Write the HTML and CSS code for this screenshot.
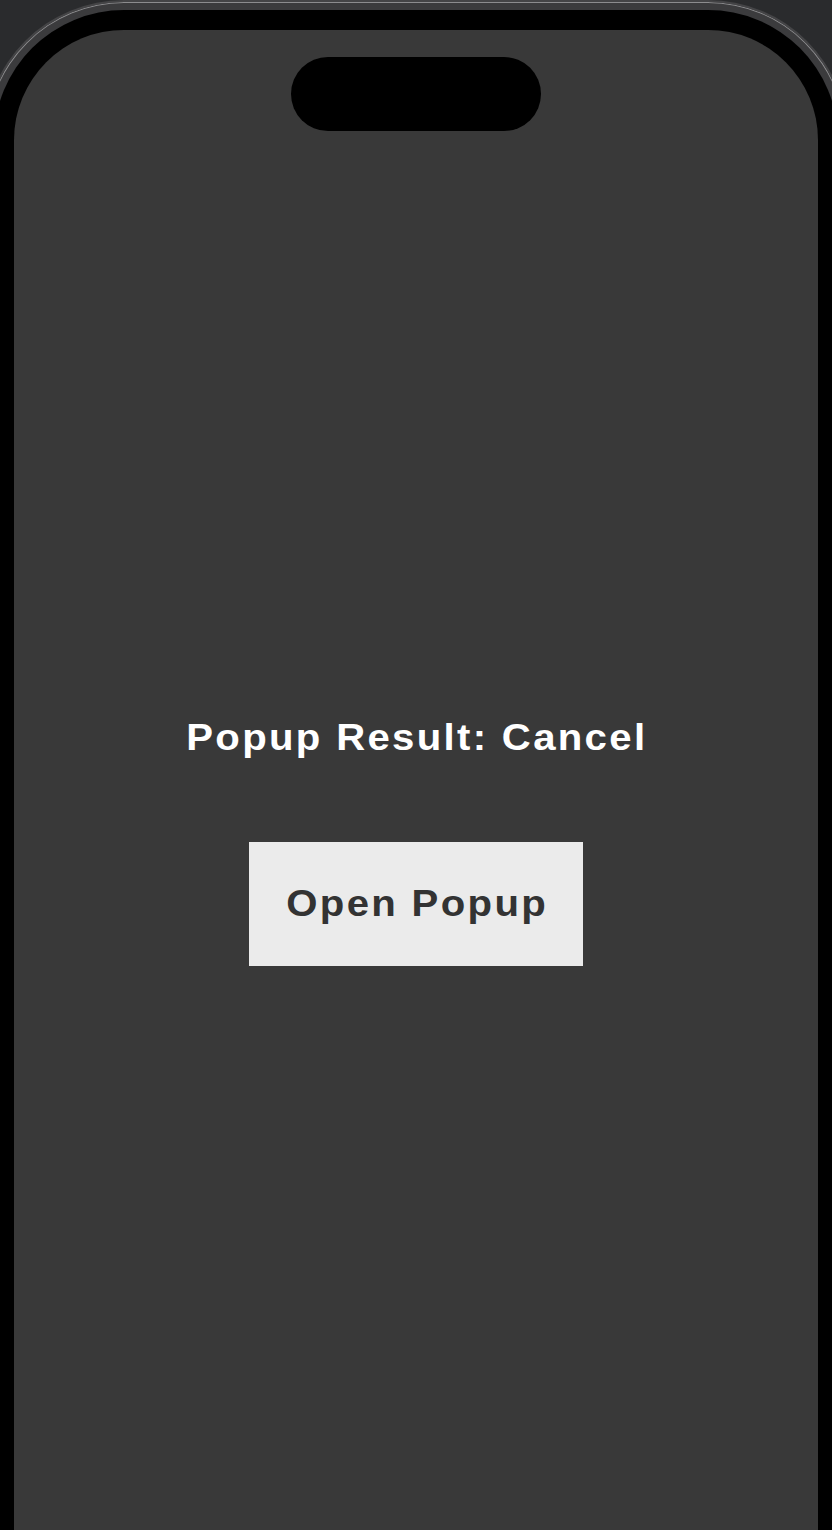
FILE: index.html
```html
<!DOCTYPE html>
<html lang="en">
<head>
<meta charset="utf-8">
<title>Popup Demo</title>
<link rel="stylesheet" href="styles.css">
</head>
<body>
  <div class="device">
    <div class="bezel">
      <div class="screen">
        <div class="island"></div>
        <div class="content">
          <div class="result"><span class="wide">Popup Result: Cancel</span></div>
          <button class="open-btn" type="button"><span class="wide">Open Popup</span></button>
        </div>
      </div>
    </div>
  </div>
</body>
</html>
```

FILE: styles.css
```css
html, body {
  margin: 0;
  padding: 0;
}

body {
  width: 832px;
  height: 1530px;
  overflow: hidden;
  background: #2a2b2d;
  font-family: "Liberation Sans", Arial, sans-serif;
}

.device {
  margin: 0 -16px;
  border: 2px solid #444446;
  border-bottom: none;
  border-radius: 140px 140px 0 0;
  background: #3b3b3d;
  box-shadow: inset 0 0 0 1px #8c8c8e;
  padding: 8px 8px 0;
}

.bezel {
  background: #000;
  border-radius: 130px 130px 0 0;
  padding: 20px 20px 0;
}

.screen {
  height: 1600px;
  background: #393939;
  border-radius: 110px 110px 0 0;
  display: flex;
  flex-direction: column;
  align-items: center;
}

.island {
  width: 250px;
  height: 74px;
  margin-top: 27px;
  border-radius: 37px;
  background: #000;
}

.content {
  margin-top: 588px;
  display: flex;
  flex-direction: column;
  align-items: center;
  gap: 86px;
}

.wide {
  display: inline-block;
  transform: scaleX(1.1);
  transform-origin: center;
  letter-spacing: 2.1px;
  padding-left: 2.1px;
}

.result {
  color: #ffffff;
  font-size: 36.5px;
  line-height: 37px;
  font-weight: bold;
}

.open-btn {
  width: 334px;
  height: 124px;
  border: none;
  border-radius: 0;
  background: #ebebeb;
  color: #333333;
  font-family: "Liberation Sans", Arial, sans-serif;
  font-size: 36.5px;
  line-height: 38px;
  font-weight: bold;
  padding: 0;
  display: flex;
  align-items: center;
  justify-content: center;
}
```
